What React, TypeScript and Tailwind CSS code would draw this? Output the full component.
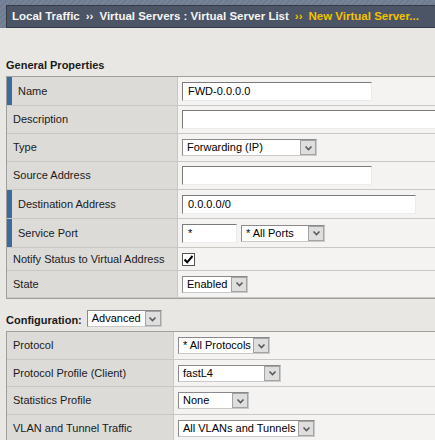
import React from "react";

const font = "font-['Liberation_Sans',Arial,sans-serif]";

function Input({ w, value }: { w: string; value?: string }) {
  return (
    <div
      className={`${w} h-[19px] bg-white border border-t-[#7b7b7b] border-l-[#7b7b7b] border-r-[#ececec] border-b-[#ececec] flex items-center pl-[5px] text-[11px] text-black leading-none`}
    >
      {value}
    </div>
  );
}

function Arrow() {
  return (
    <div className="w-[16px] h-full bg-[#dedede] border border-[#a3a3a3] flex items-center justify-center shrink-0">
      <svg width="9" height="6" viewBox="0 0 9 6">
        <path d="M1.5 1.5 L4.5 4.5 L7.5 1.5" fill="none" stroke="#5a5a5a" strokeWidth="1.6" />
      </svg>
    </div>
  );
}

function Select({ w, value }: { w: string; value: string }) {
  return (
    <div
      className={`${w} h-[17px] bg-white border border-t-[#8a8a8a] border-l-[#8a8a8a] border-r-[#c9c9c9] border-b-[#c9c9c9] flex items-stretch text-[11px] text-black leading-none`}
    >
      <div className="flex-1 flex items-center pl-[4px] whitespace-nowrap overflow-hidden">{value}</div>
      <Arrow />
    </div>
  );
}

function Checkbox() {
  return (
    <div className="w-[13px] h-[13px] bg-white border border-[#555] flex items-center justify-center">
      <svg width="11" height="11" viewBox="0 0 11 11">
        <path d="M1.5 5.5 L4.2 8.3 L9.5 2" fill="none" stroke="#000" strokeWidth="2" />
      </svg>
    </div>
  );
}

function Row({
  label,
  h,
  req,
  lw,
  children,
}: {
  label: string;
  h: string;
  req?: boolean;
  lw: string;
  children: React.ReactNode;
}) {
  return (
    <div className={`flex ${h} border-b border-[#c8c7c4]`}>
      <div className={`${lw} shrink-0 bg-[#dcdbd8] border-r border-[#c8c7c4] flex items-stretch`}>
        {req ? <div className="w-[5px] bg-[#3a6b9b] shrink-0" /> : null}
        <div className="flex items-center text-[11px] text-[#1a1a1a] whitespace-nowrap pl-[6px]">
          {label}
        </div>
      </div>
      <div className="flex-1 bg-[#f4f3f1] flex items-center gap-[4px] pl-[4px]">{children}</div>
    </div>
  );
}

export default function App() {
  const lw = "w-[171px]";
  const lw2 = "w-[167px]";
  return (
    <div className={`${font} w-[435px] h-[440px] overflow-hidden bg-[#e8e7e3]`}>
      <div className="h-[28px] pt-[5px] pl-[6px] bg-[repeating-linear-gradient(135deg,#6f7c8d_0px,#6f7c8d_2px,#76839a_2px,#76839a_4px)]">
        <div className="h-[23px] w-[450px] bg-[#4b5565] border border-[#333b47] flex items-center pl-[5px] text-[11.5px] font-bold text-[#f4f4f4] whitespace-nowrap">
          <span>Local Traffic</span>
          <span className="mx-[6px]">››</span>
          <span>Virtual Servers : Virtual Server List</span>
          <span className="mx-[6px] text-[#f2c200]">››</span>
          <span className="text-[#f2c200]">New Virtual Server...</span>
        </div>
      </div>

      <div className="h-[48px] flex items-end pb-[4px] pl-[6px] text-[11px] font-bold text-[#1a1a1a] leading-[13px]">
        General Properties
      </div>

      <div className="ml-[6px] w-[440px] border-t border-l border-[#a09f9b]">
        <Row label="Name" h="h-[29px]" req lw={lw}>
          <Input w="w-[190px]" value="FWD-0.0.0.0" />
        </Row>
        <Row label="Description" h="h-[28px]" lw={lw}>
          <Input w="w-[260px]" />
        </Row>
        <Row label="Type" h="h-[28px]" lw={lw}>
          <Select w="w-[135px]" value="Forwarding (IP)" />
        </Row>
        <Row label="Source Address" h="h-[28px]" lw={lw}>
          <Input w="w-[190px]" />
        </Row>
        <Row label="Destination Address" h="h-[29px]" req lw={lw}>
          <Input w="w-[234px]" value="0.0.0.0/0" />
        </Row>
        <Row label="Service Port" h="h-[29px]" req lw={lw}>
          <Input w="w-[55px]" value="*" />
          <Select w="w-[84px]" value="* All Ports" />
        </Row>
        <Row label="Notify Status to Virtual Address" h="h-[23px]" lw={lw}>
          <Checkbox />
        </Row>
        <div className="border-b border-[#a09f9b]">
          <Row label="State" h="h-[27px]" lw={lw}>
            <Select w="w-[66px]" value="Enabled" />
          </Row>
        </div>
      </div>

      <div className="h-[32px] pt-[11px] pl-[6px] flex items-start">
        <div className="flex items-center h-[17px] gap-[5px]">
          <span className="text-[11px] font-bold text-[#1a1a1a] pt-[3px]">Configuration:</span>
          <Select w="w-[75px]" value="Advanced" />
        </div>
      </div>

      <div className="ml-[6px] w-[440px] border-t border-l border-[#a09f9b]">
        <Row label="Protocol" h="h-[28px]" lw={lw2}>
          <Select w="w-[92px]" value="* All Protocols" />
        </Row>
        <Row label="Protocol Profile (Client)" h="h-[27px]" lw={lw2}>
          <Select w="w-[103px]" value="fastL4" />
        </Row>
        <Row label="Statistics Profile" h="h-[28px]" lw={lw2}>
          <Select w="w-[71px]" value="None" />
        </Row>
        <Row label="VLAN and Tunnel Traffic" h="h-[28px]" lw={lw2}>
          <Select w="w-[137px]" value="All VLANs and Tunnels" />
        </Row>
      </div>
    </div>
  );
}
